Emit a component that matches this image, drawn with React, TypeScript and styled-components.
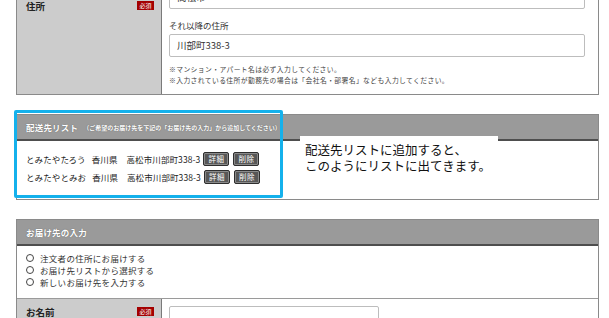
import React from "react";
import styled, { createGlobalStyle } from "styled-components";

const GlobalStyle = createGlobalStyle`
    html, body {
        margin: 0;
        padding: 0;
        background: #ffffff;
        overflow: hidden;
    }
    body {
        font-family: "Noto Sans CJK JP", "Noto Sans", sans-serif;
        color: #222;
    }
`;

const Page = styled.div`
    width: 583px;
    margin-left: 16px;
    margin-top: -22px;
`;

const FormTable = styled.div`
    border: 1px solid #8a8a8a;
    border-top: none;
`;

const FormRow = styled.div<{ $top?: boolean }>`
    display: grid;
    grid-template-columns: 145px 1fr;
    border-top: ${p => (p.$top ? "1px solid #9a9a9a" : "none")};
`;

const LabelCell = styled.div<{ $padTop: number }>`
    background: #cccccc;
    border-right: 1px solid #7a7a7a;
    padding: ${p => p.$padTop}px 7px 0 9px;
    display: flex;
    justify-content: space-between;
    align-items: flex-start;
`;

const LabelText = styled.span`
    font-size: 9.5px;
    font-weight: 700;
    line-height: 14px;
    color: #222;
`;

const Required = styled.span`
    margin-top: 2px;
    background: #a40000;
    color: #fff;
    font-size: 6px;
    line-height: 9px;
    padding: 0 2px;
    width: 13px;
    text-align: center;
`;

const ContentCell = styled.div<{ $pad: string }>`
    padding: ${p => p.$pad};
    display: flex;
    flex-direction: column;
    align-items: flex-start;
`;

const TextInput = styled.div<{ $width?: number }>`
    box-sizing: border-box;
    width: ${p => (p.$width ? `${p.$width}px` : "100%")};
    height: 23px;
    border: 1px solid #bdbdbd;
    border-radius: 2px;
    background: #fff;
    font-size: 9.5px;
    line-height: 21px;
    padding: 0 7px;
    color: #333;
`;

const FieldLabel = styled.div`
    font-size: 8.5px;
    line-height: 12px;
    color: #333;
    margin: 10px 0 3px;
`;

const Notes = styled.div`
    margin-top: 7px;
    font-size: 6.8px;
    line-height: 11px;
    letter-spacing: 0.4px;
    color: #444;
`;

const Section = styled.div<{ $gap: number }>`
    position: relative;
    margin-top: ${p => p.$gap}px;
    border: 1px solid #8a8a8a;
`;

const SectionHeader = styled.div`
    height: 24px;
    background: #9a9a9a;
    border-bottom: 2px solid #4e4e4e;
    display: flex;
    align-items: center;
    padding-left: 9px;
    color: #fff;
    text-shadow: 0 0 1px #555;
`;

const HeaderTitle = styled.span`
    font-size: 8.5px;
    font-weight: 700;
    letter-spacing: 0.2px;
`;

const HeaderNote = styled.span`
    font-size: 6px;
    font-weight: 700;
    margin-left: 5px;
`;

const ListBody = styled.div`
    padding: 9px 0 13px 9px;
    height: 36px;
`;

const AddressRow = styled.div`
    display: flex;
    align-items: center;
    height: 18px;
    font-size: 8.5px;
    letter-spacing: 0.1px;
    color: #222;
`;

const Part = styled.span<{ $gap: number }>`
    margin-right: ${p => p.$gap}px;
`;

const SmallButton = styled.span`
    box-sizing: border-box;
    width: 26px;
    height: 14px;
    margin-right: 4px;
    background: #575757;
    border: 1px solid #2e2e2e;
    box-shadow: inset 0 0 0 1px #8a8a8a;
    border-radius: 2px;
    color: #fff;
    font-size: 7.5px;
    line-height: 12px;
    text-align: center;
    letter-spacing: 0.5px;
`;

const Highlight = styled.div`
    position: absolute;
    left: -3px;
    top: -5px;
    width: 269px;
    height: 88px;
    box-sizing: border-box;
    border: 3px solid #14b1ec;
    border-radius: 2px;
    pointer-events: none;
`;

const Callout = styled.div`
    position: absolute;
    left: 283px;
    top: 21px;
    width: 198px;
    height: 40px;
    background: #fff;
    padding: 6px 0 0 5px;
    box-sizing: border-box;
    font-size: 12.5px;
    line-height: 16px;
    color: #111;
`;

const RadioList = styled.div`
    padding: 6px 0 10px 9px;
    display: flex;
    flex-direction: column;
`;

const RadioRow = styled.label`
    display: flex;
    align-items: center;
    height: 12px;
    font-size: 8.5px;
    letter-spacing: 0.3px;
    color: #333;
`;

const RadioCircle = styled.span`
    box-sizing: border-box;
    width: 8px;
    height: 8px;
    border: 1px solid #444;
    border-radius: 50%;
    margin-right: 6px;
    background: #fff;
`;

const InlineField = styled.div`
    display: flex;
    align-items: flex-start;
`;

const Hint = styled.span`
    font-size: 8.5px;
    color: #333;
    margin: 9px 0 0 6px;
`;

const addresses = [
    { name: "とみたやたろう", pref: "香川県", addr: "高松市川部町338-3" },
    { name: "とみたやとみお", pref: "香川県", addr: "高松市川部町338-3" },
];

const options = ["注文者の住所にお届けする", "お届け先リストから選択する", "新しいお届け先を入力する"];

export default function App() {
    return (
        <>
            <GlobalStyle />
            <Page>
                <FormTable>
                    <FormRow>
                        <LabelCell $padTop={21}>
                            <LabelText>住所</LabelText>
                            <Required>必須</Required>
                        </LabelCell>
                        <ContentCell $pad="8px 13px 8px 7px">
                            <TextInput>高松市</TextInput>
                            <FieldLabel>それ以降の住所</FieldLabel>
                            <TextInput>川部町338-3</TextInput>
                            <Notes>
                                ※マンション・アパート名は必ず入力してください。
                                <br />
                                ※入力されている住所が勤務先の場合は「会社名・部署名」なども入力してください。
                            </Notes>
                        </ContentCell>
                    </FormRow>
                </FormTable>

                <Section $gap={19}>
                    <SectionHeader>
                        <HeaderTitle>配送先リスト</HeaderTitle>
                        <HeaderNote>（ご希望のお届け先を下記の「お届け先の入力」から追加してください）</HeaderNote>
                    </SectionHeader>
                    <ListBody>
                        {addresses.map(a => (
                            <AddressRow key={a.name}>
                                <Part $gap={6}>{a.name}</Part>
                                <Part $gap={9}>{a.pref}</Part>
                                <Part $gap={3}>{a.addr}</Part>
                                <SmallButton>詳細</SmallButton>
                                <SmallButton>削除</SmallButton>
                            </AddressRow>
                        ))}
                    </ListBody>
                    <Highlight />
                    <Callout>
                        配送先リストに追加すると、
                        <br />
                        このようにリストに出てきます。
                    </Callout>
                </Section>

                <Section $gap={19}>
                    <SectionHeader>
                        <HeaderTitle>お届け先の入力</HeaderTitle>
                    </SectionHeader>
                    <RadioList>
                        {options.map(o => (
                            <RadioRow key={o}>
                                <RadioCircle />
                                {o}
                            </RadioRow>
                        ))}
                    </RadioList>
                    <FormRow $top>
                        <LabelCell $padTop={6}>
                            <LabelText>お名前</LabelText>
                            <Required>必須</Required>
                        </LabelCell>
                        <ContentCell $pad="7px 13px 20px 7px">
                            <InlineField>
                                <TextInput $width={210} />
                                <Hint>(例) 山田太郎</Hint>
                            </InlineField>
                        </ContentCell>
                    </FormRow>
                </Section>
            </Page>
        </>
    );
}
